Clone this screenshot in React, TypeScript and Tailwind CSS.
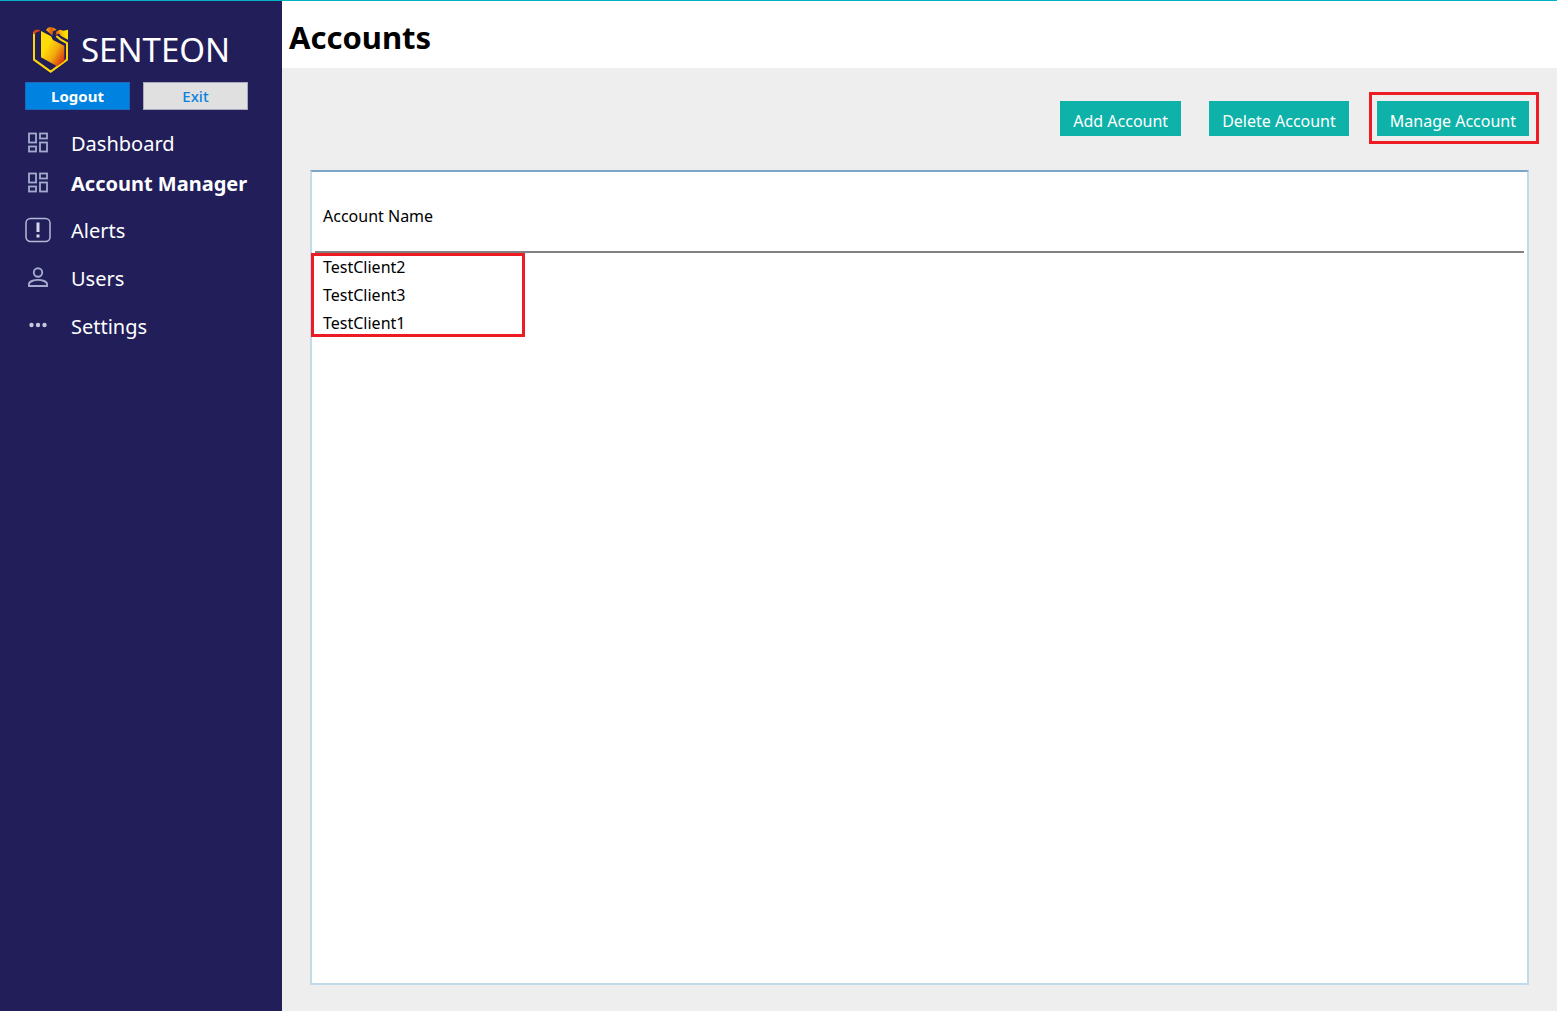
import type { ReactNode } from "react";

function Logo() {
  return (
    <svg viewBox="0 0 105 138" className="h-[46px] w-[35px] shrink-0" aria-hidden="true">
      <defs>
        <linearGradient id="shield" x1="0.1" y1="0.2" x2="0.9" y2="0.95">
          <stop offset="0.25" stopColor="#fddc08" />
          <stop offset="0.6" stopColor="#f2a80e" />
          <stop offset="1" stopColor="#d4300f" />
        </linearGradient>
        <linearGradient id="crown" x1="0" y1="0" x2="1" y2="0">
          <stop offset="0" stopColor="#ffc800" />
          <stop offset="0.5" stopColor="#dd5a10" />
          <stop offset="1" stopColor="#f6a80c" />
        </linearGradient>
        <linearGradient id="wing" x1="0" y1="0.4" x2="1" y2="0.2">
          <stop offset="0" stopColor="#d84512" />
          <stop offset="0.4" stopColor="#f7b50a" />
          <stop offset="0.8" stopColor="#ffe100" />
        </linearGradient>
      </defs>
      <path d="M3 14V98L53 134L102 98V48L82 37L70 27" fill="none" stroke="#ffd60a" strokeWidth="6" />
      <path d="M0 18L6 8H20V13L12 15L6 20H0Z" fill="#d8401a" />
      <path d="M24 12L54 28L60 39L94 56V102L72 118L24 91Z" fill="url(#shield)" />
      <path d="M39 9L45 2L52 0L62 2L71 8L60 13L58 26L52 20Z" fill="url(#crown)" />
      <path d="M69 14L80 8L92 11L105 8V38L84 27L78 20L68 24Z" fill="url(#wing)" />
    </svg>
  );
}

function GridIcon() {
  return (
    <svg viewBox="0 0 22 22" className="size-[22px]" fill="none" stroke="#a5abcc" strokeWidth="1.8" aria-hidden="true">
      <rect x="2" y="1.5" width="7" height="9" />
      <rect x="13" y="1.5" width="7" height="5" />
      <rect x="2" y="14.5" width="7" height="5" />
      <rect x="13" y="10.5" width="7" height="9" />
    </svg>
  );
}

function AlertIcon() {
  return (
    <svg viewBox="0 0 26 26" className="size-[26px]" fill="none" stroke="#b4bad6" aria-hidden="true">
      <rect x="1" y="1.5" width="24" height="23" rx="4.5" strokeWidth="1.5" />
      <path d="M13 5.5V15M13 17.5V20.5" stroke="#d5d9ea" strokeWidth="3" />
    </svg>
  );
}

function UserIcon() {
  return (
    <svg viewBox="0 0 22 22" className="size-[22px]" fill="none" stroke="#a5abcc" strokeWidth="1.9" aria-hidden="true">
      <circle cx="11" cy="5.5" r="4.2" />
      <path d="M2 19V17.2C2 14.4 7 12.9 11 12.9S20 14.4 20 17.2V19Z" />
    </svg>
  );
}

function DotsIcon() {
  return (
    <svg viewBox="0 0 22 22" className="size-[22px]" fill="#c3c8de" aria-hidden="true">
      <circle cx="4.5" cy="10" r="2.2" />
      <circle cx="11" cy="10" r="2.2" />
      <circle cx="17.5" cy="10" r="2.2" />
    </svg>
  );
}

function NavItem({ icon, label, active, tall }: { icon: ReactNode; label: string; active?: boolean; tall?: boolean }) {
  return (
    <li>
      <a
        href="#"
        aria-current={active ? "page" : undefined}
        className={`flex items-center gap-5 pl-[25px] text-white ${tall ? "h-12" : "h-10"} ${active ? "font-bold" : ""}`}
      >
        <span className="flex w-[26px] justify-center">{icon}</span>
        <span className="pt-0.5 text-[20px] leading-6">{label}</span>
      </a>
    </li>
  );
}

function ActionButton({ children }: { children: ReactNode }) {
  return (
    <button type="button" className="h-[35px] bg-[#0fb2a8] px-[13px] pt-1 text-[16px] leading-5 whitespace-nowrap text-white">
      {children}
    </button>
  );
}

const accounts = ["TestClient2", "TestClient3", "TestClient1"];

export default function App() {
  return (
    <div className="flex min-h-screen border-t border-[#00b2c3] bg-[#eeeeee] font-['Segoe_UI','Noto_Sans',sans-serif] text-black">
      <aside className="w-[282px] shrink-0 bg-[#211e5a]">
        <div className="flex items-center gap-[13px] pt-[26px] pl-[33px]">
          <Logo />
          <span className="text-[33px] leading-[46px] text-white">SENTEON</span>
        </div>
        <div className="mt-[9px] flex gap-[13px] pl-[25px]">
          <button type="button" className="h-7 w-[105px] border border-[#1b69b8] bg-[#0083e0] text-[15px] leading-5 font-bold text-white">
            Logout
          </button>
          <button type="button" className="h-7 w-[105px] border border-[#a9a9bd] bg-[#e0e0e0] text-[15px] leading-5 font-medium text-[#0b82dc]">
            Exit
          </button>
        </div>
        <nav className="mt-[13px]">
          <ul>
            <NavItem icon={<GridIcon />} label="Dashboard" />
            <NavItem icon={<GridIcon />} label="Account Manager" active />
          </ul>
          <ul className="mt-[3px]">
            <NavItem icon={<AlertIcon />} label="Alerts" tall />
            <NavItem icon={<UserIcon />} label="Users" tall />
            <NavItem icon={<DotsIcon />} label="Settings" tall />
          </ul>
        </nav>
      </aside>

      <div className="flex min-w-0 flex-1 flex-col">
        <header className="bg-white px-[7px] pt-4 pb-[11px]">
          <h1 className="text-[31px] leading-10 font-bold">Accounts</h1>
        </header>
        <main className="flex flex-1 flex-col px-7 pt-[33px] pb-[26px]">
          <div className="flex justify-end gap-7">
            <ActionButton>Add Account</ActionButton>
            <ActionButton>Delete Account</ActionButton>
            <div className="relative flex">
              <ActionButton>Manage Account</ActionButton>
              <div className="pointer-events-none absolute -top-[9px] -right-2.5 -bottom-2 -left-2 border-3 border-[#ed1c24]" />
            </div>
          </div>
          <section className="mt-[34px] flex-1 border-2 border-[#c2dbe8] border-t-[#7ba6c6] bg-white px-[3px]">
            <table className="w-full border-collapse text-left text-[16px] leading-5">
              <thead>
                <tr className="h-20 border-b-2 border-[#828282]">
                  <th scope="col" className="pt-2 pl-2 font-normal">Account Name</th>
                </tr>
              </thead>
              <tbody className="relative">
                {accounts.map((name, i) => (
                  <tr key={name} className="h-7">
                    <td className="py-1 pl-2">
                      {name}
                      {i === 0 && (
                        <div className="pointer-events-none absolute top-px -left-1 h-[84px] w-[214px] border-3 border-[#ed1c24]" />
                      )}
                    </td>
                  </tr>
                ))}
              </tbody>
            </table>
          </section>
        </main>
      </div>
    </div>
  );
}
